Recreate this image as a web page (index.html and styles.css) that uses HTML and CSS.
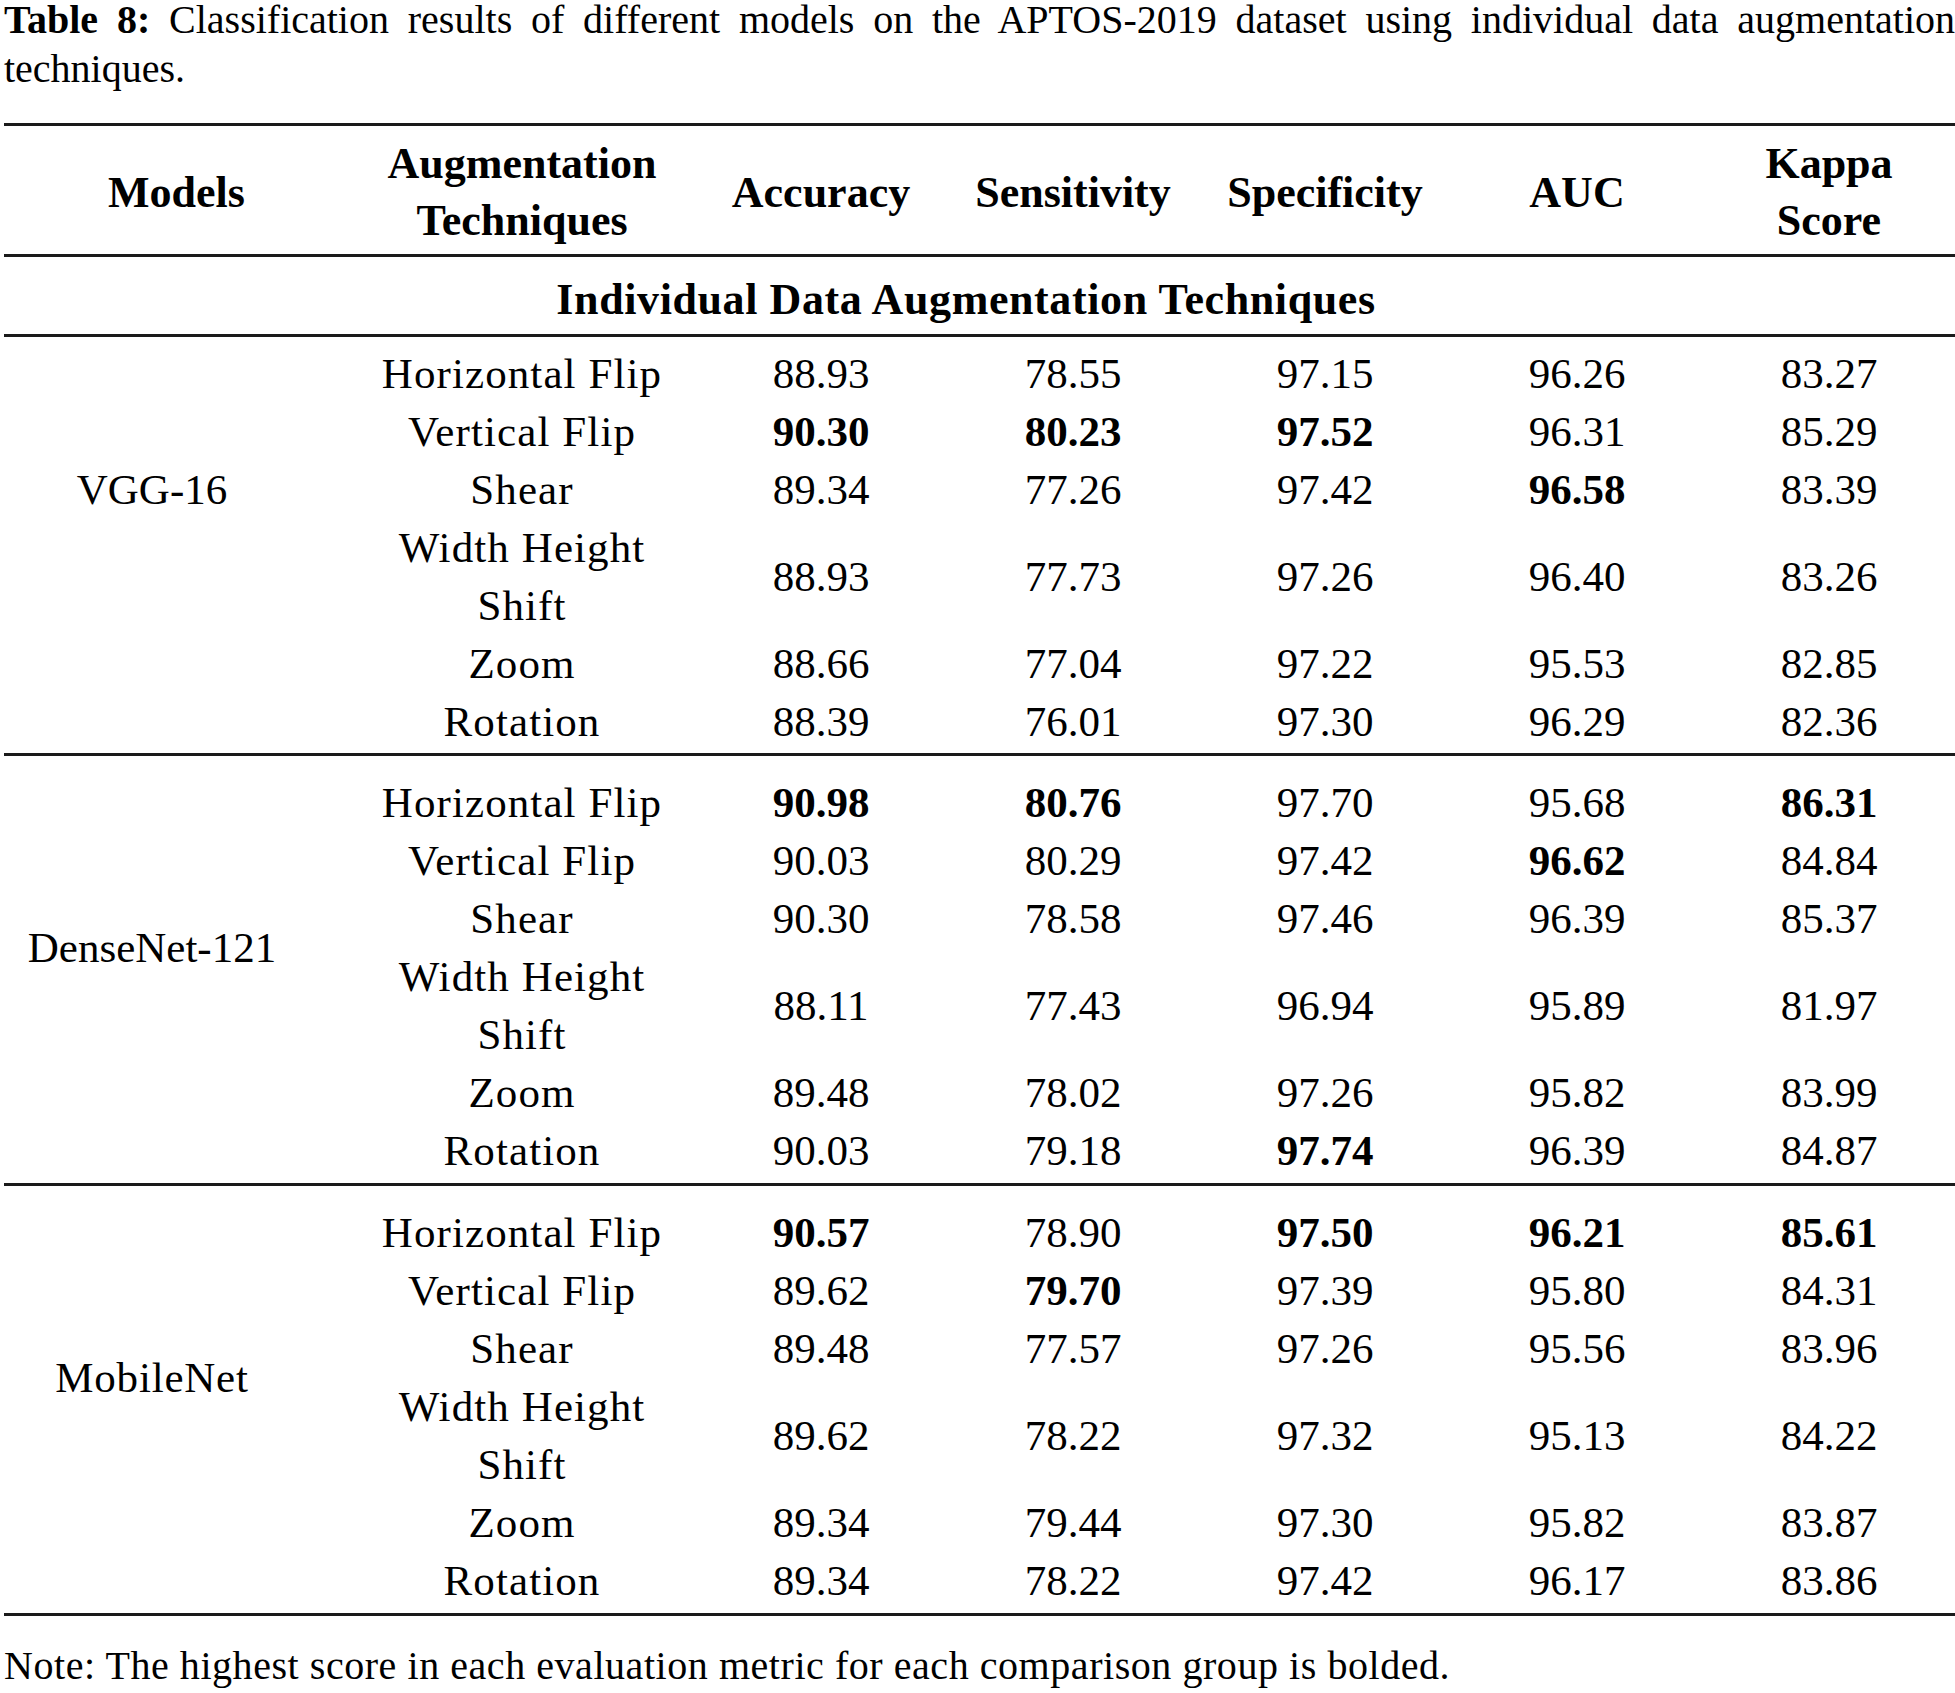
FILE: index.html
```html
<!DOCTYPE html>
<html lang="en">
<head>
<meta charset="utf-8">
<title>Table 8</title>
<link rel="stylesheet" href="styles.css">
</head>
<body>
<div class="page">
  <p class="caption"><b class="label">Table 8:</b> Classification results of different models on the APTOS-2019 dataset using individual data augmentation <span class="tail">techniques.</span></p>
  <table class="results">
    <colgroup>
      <col class="c-model"><col class="c-aug"><col class="c-num"><col class="c-num"><col class="c-num"><col class="c-num"><col class="c-num">
    </colgroup>
    <thead>
      <tr>
        <th>Models</th>
        <th>Augmentation<br>Techniques</th>
        <th>Accuracy</th>
        <th>Sensitivity</th>
        <th>Specificity</th>
        <th>AUC</th>
        <th>Kappa<br>Score</th>
      </tr>
    </thead>
    <tbody>
      <tr class="section"><th colspan="7">Individual Data Augmentation Techniques</th></tr>
    </tbody>
    <tbody class="group group-top">
      <tr class="first"><td rowspan="6" class="model model-a">VGG-16</td><td class="aug">Horizontal Flip</td><td>88.93</td><td>78.55</td><td>97.15</td><td>96.26</td><td>83.27</td></tr>
      <tr><td class="aug">Vertical Flip</td><td class="best">90.30</td><td class="best">80.23</td><td class="best">97.52</td><td>96.31</td><td>85.29</td></tr>
      <tr><td class="aug">Shear</td><td>89.34</td><td>77.26</td><td>97.42</td><td class="best">96.58</td><td>83.39</td></tr>
      <tr><td class="aug">Width Height<br>Shift</td><td>88.93</td><td>77.73</td><td>97.26</td><td>96.40</td><td>83.26</td></tr>
      <tr><td class="aug">Zoom</td><td>88.66</td><td>77.04</td><td>97.22</td><td>95.53</td><td>82.85</td></tr>
      <tr class="last"><td class="aug">Rotation</td><td>88.39</td><td>76.01</td><td>97.30</td><td>96.29</td><td>82.36</td></tr>
    </tbody>
    <tbody class="group">
      <tr class="first"><td rowspan="6" class="model model-b">DenseNet-121</td><td class="aug">Horizontal Flip</td><td class="best">90.98</td><td class="best">80.76</td><td>97.70</td><td>95.68</td><td class="best">86.31</td></tr>
      <tr><td class="aug">Vertical Flip</td><td>90.03</td><td>80.29</td><td>97.42</td><td class="best">96.62</td><td>84.84</td></tr>
      <tr><td class="aug">Shear</td><td>90.30</td><td>78.58</td><td>97.46</td><td>96.39</td><td>85.37</td></tr>
      <tr><td class="aug">Width Height<br>Shift</td><td>88.11</td><td>77.43</td><td>96.94</td><td>95.89</td><td>81.97</td></tr>
      <tr><td class="aug">Zoom</td><td>89.48</td><td>78.02</td><td>97.26</td><td>95.82</td><td>83.99</td></tr>
      <tr class="last"><td class="aug">Rotation</td><td>90.03</td><td>79.18</td><td class="best">97.74</td><td>96.39</td><td>84.87</td></tr>
    </tbody>
    <tbody class="group">
      <tr class="first"><td rowspan="6" class="model model-b model-wide">MobileNet</td><td class="aug">Horizontal Flip</td><td class="best">90.57</td><td>78.90</td><td class="best">97.50</td><td class="best">96.21</td><td class="best">85.61</td></tr>
      <tr><td class="aug">Vertical Flip</td><td>89.62</td><td class="best">79.70</td><td>97.39</td><td>95.80</td><td>84.31</td></tr>
      <tr><td class="aug">Shear</td><td>89.48</td><td>77.57</td><td>97.26</td><td>95.56</td><td>83.96</td></tr>
      <tr><td class="aug">Width Height<br>Shift</td><td>89.62</td><td>78.22</td><td>97.32</td><td>95.13</td><td>84.22</td></tr>
      <tr><td class="aug">Zoom</td><td>89.34</td><td>79.44</td><td>97.30</td><td>95.82</td><td>83.87</td></tr>
      <tr class="last"><td class="aug">Rotation</td><td>89.34</td><td>78.22</td><td>97.42</td><td>96.17</td><td>83.86</td></tr>
    </tbody>
  </table>
  <p class="note">Note: The highest score in each evaluation metric for each comparison group is bolded.</p>
</div>
</body>
</html>
```
FILE: styles.css
```css
html, body {
  margin: 0;
  padding: 0;
  background: #ffffff;
}

body {
  font-family: "Liberation Serif", "Times New Roman", serif;
  color: #000000;
}

.page {
  padding-left: 4px;
  width: 1951px;
}

.caption {
  margin: 0 0 25px 0;
  font-size: 40px;
  line-height: 49px;
  text-align: justify;
  position: relative;
  top: -5px;
}

.caption .label {
  font-weight: 700;
}

.results {
  width: 1951px;
  table-layout: fixed;
  border-collapse: separate;
  border-spacing: 0;
  font-size: 43px;
}

.c-model { width: 345px; }
.c-aug { width: 346px; }
.c-num { width: 252px; }

.results th,
.results td {
  padding: 0;
  text-align: center;
  vertical-align: middle;
  white-space: nowrap;
}

.results thead th {
  font-size: 44px;
  font-weight: 700;
  line-height: 57px;
  padding: 9px 0 5px 0;
  border-top: 3px solid #1a1a1a;
  border-bottom: 3px solid #1a1a1a;
}

.results .section th {
  font-size: 44px;
  font-weight: 700;
  letter-spacing: 0.6px;
  line-height: 58px;
  padding: 14px 27px 5px 0;
  border-bottom: 3px solid #1a1a1a;
}

.results td {
  line-height: 58px;
}

.results td.aug {
  letter-spacing: 1.1px;
}

.group .first td {
  padding-top: 18px;
}

.group .last td {
  padding-bottom: 3px;
  border-bottom: 3px solid #1a1a1a;
}

.group-top .first td {
  padding-top: 8px;
}

.group-top .last td {
  padding-bottom: 2px;
}

.results td.model {
  vertical-align: top;
  padding-right: 49px;
  border-bottom: 3px solid #1a1a1a;
}

.results td.model-a {
  padding-top: 124px;
}

.results td.model-b {
  padding-top: 163px;
}

.results td.model-wide {
  letter-spacing: 0.8px;
}

.best {
  font-weight: 700;
}

.note {
  margin: 25px 0 0 0;
  font-size: 40px;
  line-height: 49px;
  letter-spacing: 0.55px;
}
```
